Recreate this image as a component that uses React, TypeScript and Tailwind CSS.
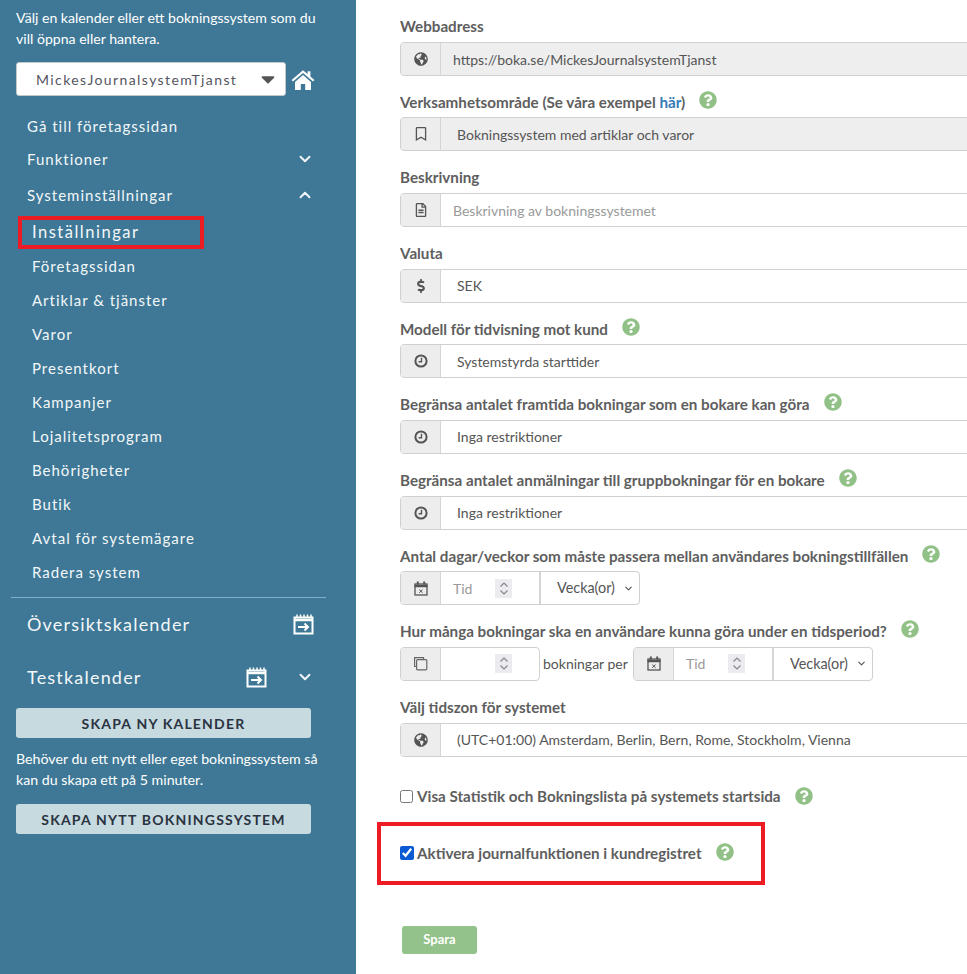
import React from "react";
import { FaGlobeAmericas, FaRegBookmark, FaRegFileAlt, FaDollarSign, FaQuestionCircle, FaCaretDown } from "react-icons/fa";
import { ChevronDown, ChevronUp } from "lucide-react";

const Help = ({ className = "ml-[14px]" }: { className?: string }) => (
  <FaQuestionCircle className={`${className} inline-block text-[18px] text-[#91c186] shrink-0`} />
);

const HomeIcon = () => (
  <svg width="24" height="21" viewBox="0 0 24 21" fill="white" className="ml-[5px]">
    <path d="M0.6 11 L12 1.2 L16.6 5.1 V2.2 H19.4 V7.5 L23.4 11 L22 12.6 L12 4 L2 12.6 Z" />
    <path d="M4 13 L12 6 L20 13 V21 H14.2 V15 H9.8 V21 H4 Z" />
  </svg>
);

const ClockIcon = () => (
  <svg width="14" height="14" viewBox="0 0 14 14" fill="none" stroke="#555">
    <circle cx="7" cy="7" r="5.6" strokeWidth="2" />
    <path d="M7.5 3.8V7.8H4.6" strokeWidth="1.4" />
  </svg>
);

const CopyIcon = () => (
  <svg width="15" height="15" viewBox="0 0 15 15" fill="none" stroke="#666" strokeWidth="1.2">
    <path d="M3 10.5H1.6V1.6H10.5V3" />
    <rect x="3.6" y="3.6" width="10.2" height="10.2" rx="1" />
  </svg>
);

const CalX = () => (
  <svg width="14" height="15" viewBox="0 0 14 15" fill="none" stroke="#555">
    <rect x="1" y="3" width="12" height="11" strokeWidth="1.3" />
    <path d="M0.5 5h13" strokeWidth="2.6" />
    <path d="M3.8 0.5v3M10.2 0.5v3" strokeWidth="2" />
    <path d="M5.2 8.6l3.4 3.2M8.6 8.6l-3.4 3.2" strokeWidth="1" />
  </svg>
);

const CalGo = () => (
  <svg width="21" height="21" viewBox="0 0 21 21" fill="none" stroke="white" strokeWidth="2">
    <rect x="1.5" y="3.5" width="18" height="16" />
    <path d="M1 6h19" strokeWidth="2.5" />
    <path d="M4 0.5v3M7.5 0.5v3M11 0.5v3M14.5 0.5v3M18 0.5v3" strokeWidth="1.5" />
    <path d="M5 13h10M11.5 9.5l3.5 3.5-3.5 3.5" />
  </svg>
);

const Addon = ({ children }: { children: React.ReactNode }) => (
  <div className="w-[40px] shrink-0 self-stretch flex items-center justify-center bg-[#ededed] border-r border-[#d5d5d5] text-[#555] text-[14px]">
    {children}
  </div>
);

const Label = ({ children, help }: { children: React.ReactNode; help?: boolean }) => (
  <div className="h-[41.67px] pt-[16px] flex items-start text-[15.2px] leading-[20px] font-bold text-[#5e5e5e]">
    <span>{children}</span>
    {help && <Help className="ml-[14px] -mt-[1px]" />}
  </div>
);

const Row = ({ label, help, icon, value, muted, disabled, pad = "pl-[16px]" }: { label: React.ReactNode; help?: boolean; icon: React.ReactNode; value: string; muted?: boolean; disabled?: boolean; pad?: string }) => (
  <div>
    <Label help={help}>{label}</Label>
    <div className={`h-[34px] w-[640px] flex items-center border border-[#d0d0d0] rounded-[4px] overflow-hidden text-[14px] ${disabled ? "bg-[#eeeeee]" : "bg-white"}`}>
      <Addon>{icon}</Addon>
      <span className={`${pad} ${disabled || muted ? "pt-[1px]" : ""} ${muted ? "text-[#9a9a9a]" : "text-[#555]"}`}>{value}</span>
    </div>
  </div>
);

const Spin = () => (
  <span className="w-[17px] h-[19px] bg-[#ececf0] flex items-center justify-center">
    <svg width="10" height="15" viewBox="0 0 10 15" fill="none" stroke="#888" strokeWidth="1.2">
      <path d="M1.5 5.5L5 2l3.5 3.5M1.5 9.5L5 13l3.5-3.5" />
    </svg>
  </span>
);

const TimeGroup = ({ icon, placeholder, w }: { icon: React.ReactNode; placeholder?: string; w?: string }) => (
  <div className={`h-[34px] flex items-center border border-[#d0d0d0] rounded-[4px] overflow-hidden bg-white text-[14px] ${w ?? ""}`}>
    <Addon>{icon}</Addon>
    <div className="w-[98px] flex items-center justify-between pl-[12px] pr-[27px] text-[#9a9a9a]">
      <span>{placeholder ?? "\u00a0"}</span>
      <Spin />
    </div>
    {placeholder && (
      <div className="h-full w-[100px] border-l-2 border-[#d5d5d5] flex items-center justify-between pl-[16px] pr-[3px] text-[14.4px] text-[#555]">
        <span>Vecka(or)</span>
        <ChevronDown size={11} strokeWidth={2.5} className="mr-[2px]" />
      </div>
    )}
  </div>
);

const NavItem = ({ children, right, cls }: { children: React.ReactNode; right?: React.ReactNode; cls: string }) => (
  <div className={`flex items-center justify-between pl-[27px] pr-[42px] text-[#f3f7f9] ${cls}`}>
    <span>{children}</span>
    {right}
  </div>
);

const subs = ["Företagssidan", "Artiklar & tjänster", "Varor", "Presentkort", "Kampanjer", "Lojalitetsprogram", "Behörigheter", "Butik", "Avtal för systemägare", "Radera system"];

export default function App() {
  return (
    <div className="flex h-[974px] w-[967px] overflow-hidden bg-white font-['Lato','Liberation_Sans',sans-serif]">
      <aside className="w-[356px] shrink-0 bg-[#3e7896] text-white">
        <p className="pl-[16px] pr-[30px] pt-[7px] text-[14.1px] leading-[21px]">Välj en kalender eller ett bokningssystem som du vill öppna eller hantera.</p>
        <div className="mt-[13px] pl-[16px] flex items-center">
          <div className="w-[270px] h-[34px] bg-white rounded-[3px] border border-[#c0c8cc] flex items-center justify-between pl-[19px] pr-[6px] text-[#55555f] text-[14px] tracking-[1.4px]">
            <span>MickesJournalsystemTjanst</span>
            <FaCaretDown className="text-[#555] text-[22px]" />
          </div>
          <HomeIcon />
        </div>
        <NavItem cls="mt-[19px] h-[22px] text-[15px] tracking-[1px]">Gå till företagssidan</NavItem>
        <NavItem cls="mt-[11px] h-[22px] text-[15px] tracking-[1px]" right={<ChevronDown size={18} strokeWidth={2.5} />}>Funktioner</NavItem>
        <NavItem cls="mt-[14px] h-[22px] text-[15px] tracking-[1px]" right={<ChevronUp size={18} strokeWidth={2.5} />}>Systeminställningar</NavItem>
        <div className="ml-[18px] mt-[10px] w-[186px] h-[33px] border-[4px] border-[#ed1c24] pl-[10px] pb-[1px] flex items-center text-[16.5px] tracking-[1.5px] text-[#f3f7f9]">Inställningar</div>
        <div>
          {subs.map((s) => (
            <div key={s} className="h-[34px] pl-[32px] flex items-center text-[15px] tracking-[1px] text-[#f3f7f9]">{s}</div>
          ))}
        </div>
        <div className="mx-[11px] mt-[8px] w-[315px] border-t border-[#7fb0c8]" />
        <NavItem cls="mt-[14px] h-[24px] text-[18px] tracking-[1.2px]" right={<CalGo />}>Översiktskalender</NavItem>
        <div className="mt-[29px] h-[24px] flex items-center pl-[27px] pr-[42px] text-[18px] tracking-[1.2px] text-[#f3f7f9]">
          <span className="flex-1">Testkalender</span>
          <CalGo />
          <span className="ml-[29px]"><ChevronDown size={18} strokeWidth={2.5} /></span>
        </div>
        <button className="block ml-[16px] mt-[19px] w-[295px] h-[30px] rounded-[3px] bg-[#c6dae0] text-[#2b3340] text-[14px] font-bold tracking-[1.2px]">SKAPA NY KALENDER</button>
        <p className="pl-[16px] pr-[30px] mt-[10px] text-[14.2px] leading-[21px]">Behöver du ett nytt eller eget bokningssystem så kan du skapa ett på 5 minuter.</p>
        <button className="block ml-[16px] mt-[14px] w-[295px] h-[30px] rounded-[3px] bg-[#c6dae0] text-[#2b3340] text-[14px] font-bold tracking-[1.2px]">SKAPA NYTT BOKNINGSSYSTEM</button>
      </aside>

      <main className="flex-1 min-w-0 pl-[44px]">
        <Row label="Webbadress" icon={<FaGlobeAmericas />} value="https://boka.se/MickesJournalsystemTjanst" disabled pad="pl-[12px]" />
        <Row label={<>Verksamhetsområde (Se våra exempel <span className="text-[#337ab7]">här</span>)</>} help icon={<FaRegBookmark />} value="Bokningssystem med artiklar och varor" disabled />
        <Row label="Beskrivning" icon={<FaRegFileAlt />} value="Beskrivning av bokningssystemet" muted pad="pl-[12px]" />
        <Row label="Valuta" icon={<FaDollarSign />} value="SEK" />
        <Row label="Modell för tidvisning mot kund" help icon={<ClockIcon />} value="Systemstyrda starttider" />
        <Row label="Begränsa antalet framtida bokningar som en bokare kan göra" help icon={<ClockIcon />} value="Inga restriktioner" />
        <Row label="Begränsa antalet anmälningar till gruppbokningar för en bokare" help icon={<ClockIcon />} value="Inga restriktioner" />
        <Label help>Antal dagar/veckor som måste passera mellan användares bokningstillfällen</Label>
        <TimeGroup icon={<CalX />} placeholder="Tid" w="w-[240px]" />
        <Label help>Hur många bokningar ska en användare kunna göra under en tidsperiod?</Label>
        <div className="flex items-center text-[14px] text-[#555]">
          <TimeGroup icon={<CopyIcon />} w="w-[140px]" />
          <span className="w-[93px] pl-[3px]">bokningar per</span>
          <TimeGroup icon={<CalX />} placeholder="Tid" w="w-[240px]" />
        </div>
        <Row label="Välj tidszon för systemet" icon={<FaGlobeAmericas />} value="(UTC+01:00) Amsterdam, Berlin, Bern, Rome, Stockholm, Vienna" />
        <div className="mt-[28px] h-[24px] flex items-center text-[15.2px] font-bold text-[#5e5e5e]">
          <input type="checkbox" readOnly className="w-[13px] h-[13px] mr-[4px]" />
          <span>Visa Statistik och Bokningslista på systemets startsida</span>
          <Help className="ml-[14px] -mt-[2px]" />
        </div>
        <div className="-ml-[23px] mt-[13px] w-[388px] h-[63px] border-[4px] border-[#ed1c24] pl-[19px] flex items-center text-[15.2px] font-bold text-[#5e5e5e]">
          <input type="checkbox" checked readOnly className="w-[14px] h-[14px] mr-[3px] accent-[#0a5bd3]" />
          <span>Aktivera journalfunktionen i kundregistret</span>
          <Help className="ml-[14px] -mt-[2px]" />
        </div>
        <button className="block ml-[2px] mt-[41px] w-[75px] h-[28px] rounded-[3px] bg-[#93c28a] text-white text-[13px] font-bold">Spara</button>
      </main>
    </div>
  );
}
